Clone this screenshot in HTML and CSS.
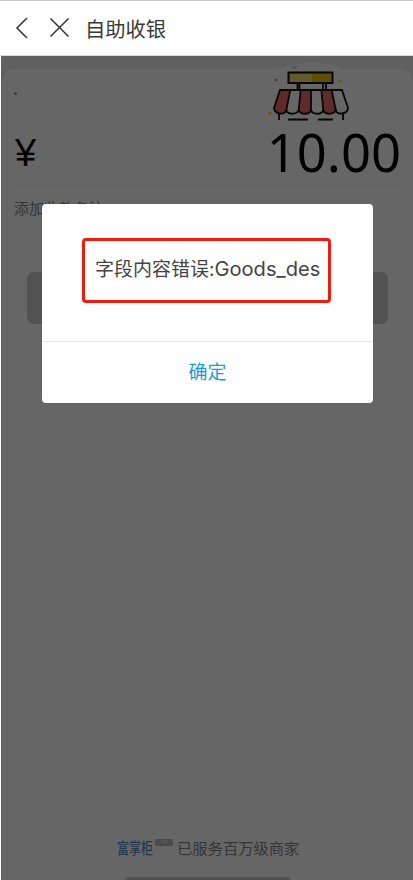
FILE: index.html
```html
<!DOCTYPE html>
<html lang="zh">
<head>
<meta charset="utf-8">
<title>自助收银</title>
<link rel="stylesheet" href="styles.css">
</head>
<body>
<div class="app">
  <header class="topbar">
    <svg class="icon-back" width="14" height="22" viewBox="0 0 14 22"><path d="M12 1 2 11l10 10"/></svg>
    <svg class="icon-close" width="21" height="21" viewBox="0 0 21 21"><path d="M1.500 1.500 19.500 19.500M19.500 1.500 1.500 19.500"/></svg>
    <h1 class="title">自助收银</h1>
  </header>
  <main class="main">
    <section class="card">
      <svg class="shop" width="90" height="70" viewBox="0 0 90 70">
        <path class="bubble" d="M16 13C30 9 40 7 54 7c14 0 22 3 28 6z"/>
        <rect class="sign" x="28.500" y="16.500" width="44" height="10.500"/>
        <rect class="sign-hi" x="30" y="18" width="22" height="8"/>
        <path class="line" d="M37.500 27v7M39.500 27v7M63 27v7M66 27v7"/>
        <path class="fill-white" d="M20 34H82L88 52C87 59 77 59 75.700 54 74 59 64.500 59 63.300 54 62 59 52.500 59 51 54 50 59 40 59 38.700 54 37 59 27.500 59 26.300 54 25 59 15 59 14 52Z"/>
        <path class="red" d="M20 34H30.300L26.300 54C25 59 15 59 14 52ZM40.700 34H51V54C50 59 40 59 38.700 54ZM61.300 34H71.700L75.700 54C74 59 64.500 59 63.300 54Z"/>
        <path class="line" d="M20 34H82L88 52C87 59 77 59 75.700 54 74 59 64.500 59 63.300 54 62 59 52.500 59 51 54 50 59 40 59 38.700 54 37 59 27.500 59 26.300 54 25 59 15 59 14 52Z"/>
        <path class="line" d="M30.300 34 26.300 54M40.700 34 38.700 54M51 34V54M61.300 34 63.300 54M71.700 34 75.700 54M19 57V64M83 57V64M28 63.500H48M58 63.500H73"/>
        <circle class="dot-red" cx="16" cy="24" r="1.500"/>
        <circle class="dot-yellow" cx="80.500" cy="25" r="1.200"/>
        <circle class="dot-yellow" cx="10" cy="57" r="1.500"/>
        <path class="dot-blue" d="M33 10c0 2.500 3.500 2.500 3.500 0"/>
      </svg>
      <span class="speck"></span>
      <div class="amount">
        <span class="currency">¥</span>
        <span class="value">10.00</span>
      </div>
      <p class="note">添加收款备注</p>
      <button class="pay" type="button"></button>
      <footer class="brand">
        <span class="logo">富掌柜</span><span class="tm">TM</span>
        <span class="served">已服务百万级商家</span>
      </footer>
      <div class="home-bar"></div>
    </section>
    <div class="overlay">
      <div class="dialog">
        <div class="message">
          <span class="highlight"></span>
          字段内容错误:<span class="latin">Goods_des</span>
        </div>
        <div class="ok">确定</div>
      </div>
    </div>
  </main>
</div>
</body>
</html>
```
FILE: styles.css
```css
* { box-sizing: border-box; }
html, body { margin: 0; height: 880px; overflow: hidden; }
body {
  background: #fff;
  font-family: "Liberation Sans", "Noto Sans CJK SC", sans-serif;
}
.app { display: flex; flex-direction: column; height: 880px; }
.topbar {
  height: 56px;
  border-top: 1px solid #c9c9c9;
  border-bottom: 1px solid #d8d8d8;
  display: flex;
  align-items: center;
  padding: 0 0 1px 15px;
  flex: none;
}
.topbar svg { fill: none; stroke: #333; stroke-width: 1.500; }
.icon-back { margin-right: 20px; }
.icon-close { margin-right: 15px; }
.title { margin: 0; font-size: 20.300px; font-weight: 400; color: #3a3a3a; }
.main {
  position: relative;
  flex: 1;
  margin-left: 1px;
  background: #f0f0f0;
  padding-top: 13px;
  overflow: hidden;
}
.card {
  position: relative;
  height: 100%;
  margin-left: 1px;
  background: #fff;
  border-radius: 14px 14px 0 0;
  padding: 58px 12px 0 12px;
  display: flex;
  flex-direction: column;
}
.shop { position: absolute; left: 258px; top: -13px; overflow: visible; }
.shop path, .shop rect { fill: none; }
.shop .bubble { fill: #fff; }
.shop .sign { fill: #e6c800; stroke: #111; stroke-width: 2; }
.shop .sign-hi { fill: #f0e070; }
.shop .line { stroke: #111; stroke-width: 1.800; fill: none; }
.shop .fill-white { fill: #fff; }
.shop .red { fill: #f0676a; }
.shop .dot-red { fill: #f08a9a; }
.shop .dot-yellow { fill: #f5d020; }
.shop .dot-blue { stroke: #7aa6e8; stroke-width: 1; }
.speck { position: absolute; left: 12px; top: 23px; width: 3px; height: 3px; border-radius: 50%; background: #999; }
.amount {
  display: flex;
  justify-content: space-between;
  align-items: flex-end;
  height: 59px;
  border-bottom: 1px solid #f0f0f0;
  padding-bottom: 9px;
}
.currency { font-size: 38px; line-height: 48px; color: #000; margin: 0 0 -1px 1px; }
.value { font-size: 52.500px; line-height: 48px; color: #000; font-family: "Noto Sans", sans-serif; }
.note { margin: 13px 0 0; font-size: 15px; line-height: 20px; color: #888; }
.pay {
  margin: 53px 13px 0 13px;
  height: 52px;
  flex: none;
  border: 0;
  border-radius: 7px;
  background: #ccc;
}
.brand {
  margin-top: auto;
  display: flex;
  align-items: center;
  padding-left: 103px;
  height: 20px;
  position: relative;
  top: -23px;
}
.logo { font-family: "Liberation Serif", "Noto Sans CJK SC", serif; font-size: 12px; color: #4a80c0; width: 36px; transform: scaleY(1.350); }
.tm { background: #bbb; color: #eee; font-size: 5px; width: 18px; height: 7px; line-height: 7px; text-align: center; margin: -9px 0 0 2px; }
.served { font-size: 15.300px; color: #888; margin-left: 4px; white-space: nowrap; }
.home-bar {
  position: absolute;
  left: 123px;
  bottom: -3px;
  width: 165px;
  height: 6px;
  border-radius: 3px;
  background: #ccc;
}
.overlay {
  position: absolute;
  inset: 0;
  background: rgba(0, 0, 0, .6);
  padding: 148px 0 0 41px;
}
.dialog {
  width: 331px;
  height: 199px;
  background: #fff;
  border-radius: 4px;
  display: flex;
  flex-direction: column;
}
.message {
  position: relative;
  height: 138px;
  flex: none;
  border-bottom: 1px solid #e6e6e6;
  padding: 51px 0 0 53px;
  font-family: "Inter", "Noto Sans CJK SC", sans-serif;
  font-size: 19px;
  line-height: 28px;
  color: #444;
  white-space: nowrap;
}
.latin { font-size: 20.100px; }
.highlight {
  position: absolute;
  left: 40px;
  top: 34px;
  width: 249px;
  height: 65px;
  border: 3px solid #f3190f;
  border-radius: 4px;
}
.ok {
  flex: 1;
  display: flex;
  align-items: center;
  justify-content: center;
  padding-bottom: 4px;
  font-size: 19px;
  color: #1a9ae0;
}
```
